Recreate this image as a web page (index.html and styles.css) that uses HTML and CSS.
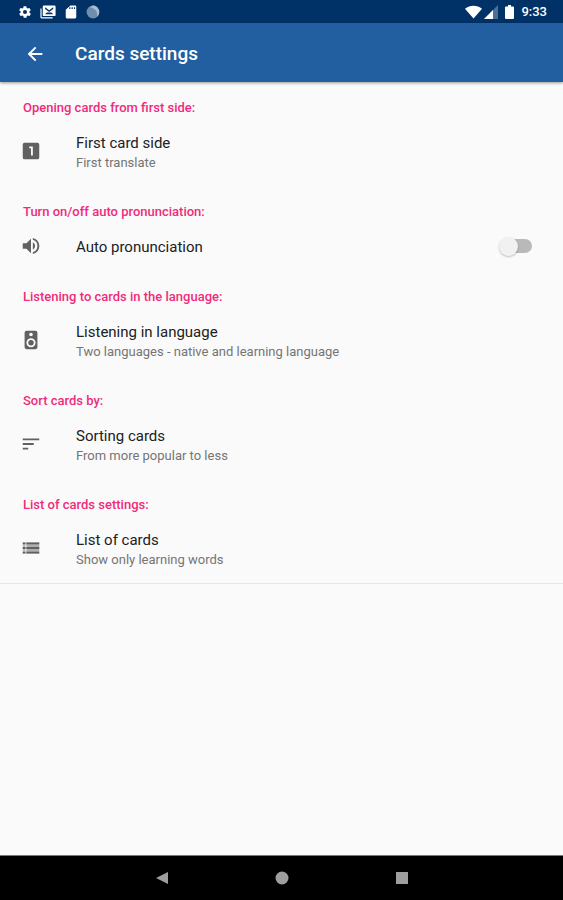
FILE: index.html
```html
<!DOCTYPE html>
<html lang="en">
  <head>
    <meta charset="UTF-8" />
    <meta name="viewport" content="width=device-width, initial-scale=1.0" />
    <title>Cards settings</title>
    <link rel="stylesheet" href="styles.css">
  </head>
  <body>
    <div class="status-bar">
      <div class="status-icons">
        <svg class="status-icon" viewBox="0 0 24 24"><path fill-rule="evenodd" d="M19.4 13c0-.3.1-.6.1-1s0-.7-.1-1l2.100-1.700c.2-.1.2-.4.1-.6l-2-3.500c-.1-.2-.4-.3-.6-.2l-2.500 1c-.5-.4-1.100-.7-1.700-1l-.4-2.600c0-.2-.2-.4-.5-.4h-4c-.2 0-.5.2-.5.4L9.100 5c-.6.3-1.200.6-1.700 1l-2.500-1c-.2-.1-.5 0-.6.2l-2 3.500c-.1.2-.1.5.1.6L4.600 11c-.1.300-.1.600-.1 1s0 .7.1 1l-2.100 1.700c-.2.1-.2.4-.1.6l2 3.500c.1.2.4.3.6.2l2.500-1c.5.4 1.100.7 1.700 1l.4 2.600c0 .2.2.4.5.4h4c.2 0 .5-.2.5-.4l.4-2.600c.6-.3 1.200-.6 1.700-1l2.500 1c.2.1.5 0 .6-.2l2-3.500c.1-.2.1-.5-.1-.6zM12 15.500a3.500 3.500 0 1 1 0-7 3.500 3.500 0 0 1 0 7z"/></svg>
        <svg class="status-icon status-icon-wide" viewBox="0 0 26 24"><path d="M0 6h2v15h19v2H2a2 2 0 0 1-2-2z"/><path fill-rule="evenodd" d="M6 1h18a2 2 0 0 1 2 2v14a2 2 0 0 1-2 2H6a2 2 0 0 1-2-2V3a2 2 0 0 1 2-2zm2 3v3l7 5 7-5V4l-7 5zm0 12h14l-3-3H11z"/></svg>
        <svg class="status-icon" viewBox="0 0 24 24"><path fill-rule="evenodd" d="M20 1h-9L3 8v13a2 2 0 0 0 2 2h14a2 2 0 0 0 2-2V3a2 2 0 0 0-1-2zM11 4H9v3h2zm4 0h-2v3h2zm4 0h-2v3h2z"/></svg>
        <svg class="status-icon" viewBox="0 0 24 24"><circle cx="12" cy="12" r="11" fill="#6f8eae"/><path fill="#a9bdd1" d="M12 1a11 11 0 0 1 7 19c1-7-1-13-12-16a11 11 0 0 1 5-3z"/></svg>
      </div>
      <div class="status-icons status-right">
        <svg class="status-icon status-icon-wifi" viewBox="0 0 18 14"><path d="M0 3.500C5-.8 13-.8 18 3.500L9 14z"/></svg>
        <svg class="status-icon" viewBox="0 0 14 14"><path fill="#4b6f97" d="M14 0v14H0z"/><path d="M9 5v9H0z"/></svg>
        <svg class="status-icon status-icon-battery" viewBox="0 0 9 14"><path d="M3 0h3v1.500h2a1 1 0 0 1 1 1V13a1 1 0 0 1-1 1H1a1 1 0 0 1-1-1V2.500a1 1 0 0 1 1-1h2z"/></svg>
        <span class="clock">9:33</span>
      </div>
    </div>

    <header class="app-bar">
      <button class="back-button" aria-label="Back">
        <svg class="back-icon" viewBox="0 0 24 24"><path d="M20 10.800H8.200l5.300-5.300L12 4l-8 8 8 8 1.500-1.500-5.300-5.300H20z"/></svg>
      </button>
      <h1 class="app-title">Cards settings</h1>
    </header>

    <main class="settings">
      <section class="group">
        <h2 class="group-title">Opening cards from first side:</h2>
        <button class="row">
          <svg class="row-icon" viewBox="0 0 24 24"><path fill-rule="evenodd" d="M5 3h14a2 2 0 0 1 2 2v14a2 2 0 0 1-2 2H5a2 2 0 0 1-2-2V5a2 2 0 0 1 2-2zm9 14V7h-4v2h2v8z"/></svg>
          <span class="row-text">
            <span class="row-title">First card side</span>
            <span class="row-summary">First translate</span>
          </span>
        </button>
      </section>

      <section class="group">
        <h2 class="group-title">Turn on/off auto pronunciation:</h2>
        <label class="row" for="autoPronunciation">
          <svg class="row-icon" viewBox="0 0 24 24"><path d="M3 9v6h4l5 5V4L7 9zm13.500 3A4.500 4.500 0 0 0 14 8v8a4.500 4.500 0 0 0 2.500-4zM14 3.200v2.100a7 7 0 0 1 0 13.400v2.100a9 9 0 0 0 0-17.600z"/></svg>
          <span class="row-text">
            <span class="row-title">Auto pronunciation</span>
          </span>
          <input class="switch" type="checkbox" role="switch" id="autoPronunciation" />
        </label>
      </section>

      <section class="group">
        <h2 class="group-title">Listening to cards in the language:</h2>
        <button class="row">
          <svg class="row-icon" viewBox="0 0 24 24"><path fill-rule="evenodd" d="M17 2H7a2 2 0 0 0-2 2v16a2 2 0 0 0 2 2h10a2 2 0 0 0 2-2V4a2 2 0 0 0-2-2zm-5 2a2 2 0 1 1 0 4 2 2 0 0 1 0-4zm0 16a5 5 0 1 1 0-10 5 5 0 0 1 0 10z"/><circle cx="12" cy="15" r="3"/></svg>
          <span class="row-text">
            <span class="row-title">Listening in language</span>
            <span class="row-summary">Two languages - native and learning language</span>
          </span>
        </button>
      </section>

      <section class="group">
        <h2 class="group-title">Sort cards by:</h2>
        <button class="row">
          <svg class="row-icon" viewBox="0 0 24 24"><path d="M3 18h6v-2H3zM3 6v2h18V6zm0 7h12v-2H3z"/></svg>
          <span class="row-text">
            <span class="row-title">Sorting cards</span>
            <span class="row-summary">From more popular to less</span>
          </span>
        </button>
      </section>

      <section class="group">
        <h2 class="group-title">List of cards settings:</h2>
        <button class="row">
          <svg class="row-icon" viewBox="0 0 24 24"><path opacity="0.4" d="M3 6h3v12H3z"/><path opacity="0.5" d="M7 6h14v12H7z"/><path d="M3 8h3V6H3zm0 5h3v-2H3zm0 5h3v-2H3zM7 8h14V6H7zm0 5h14v-2H7zm0 5h14v-2H7z"/></svg>
          <span class="row-text">
            <span class="row-title">List of cards</span>
            <span class="row-summary">Show only learning words</span>
          </span>
        </button>
      </section>
    </main>

    <nav class="nav-bar">
      <button class="nav-button" aria-label="Back">
        <svg class="nav-icon" viewBox="0 0 14 14"><path d="M13 1v12L1 7z"/></svg>
      </button>
      <button class="nav-button" aria-label="Home">
        <svg class="nav-icon" viewBox="0 0 14 14"><circle cx="7" cy="7" r="6.500"/></svg>
      </button>
      <button class="nav-button" aria-label="Recent apps">
        <svg class="nav-icon" viewBox="0 0 14 14"><path d="M1 1h12v12H1z"/></svg>
      </button>
    </nav>
  </body>
</html>
```

FILE: styles.css
```css
* {
  box-sizing: border-box;
}
body {
  margin: 0;
  min-height: 100vh;
  display: flex;
  flex-direction: column;
  font-family: Roboto, Arial, sans-serif;
  background-color: #fafafa;
  color: #212121;
}
button {
  border: none;
  padding: 0;
  background: none;
  font: inherit;
  color: inherit;
  text-align: left;
  cursor: pointer;
}

/* Status bar */
.status-bar {
  height: 23px;
  padding: 0 16px 0 18px;
  display: flex;
  justify-content: space-between;
  align-items: center;
  background-color: #003267;
  color: #fff;
}
.status-icons {
  display: flex;
  align-items: center;
  gap: 8px;
}
.status-right {
  gap: 2px;
}
.status-icon {
  width: 14px;
  height: 14px;
  fill: #fff;
}
.status-icon-wide {
  width: 16px;
}
.status-icon-wifi {
  width: 17px;
}
.status-icon-battery {
  width: 9px;
  margin: 0 5px;
}
.clock {
  font-size: 13px;
  font-weight: 500;
}

/* App bar */
.app-bar {
  height: 59px;
  padding: 2px 0 0 24px;
  display: flex;
  align-items: center;
  gap: 29px;
  background-color: #215fa0;
  color: #fff;
  box-shadow: 0 1px 3px rgba(0, 0, 0, 0.4);
}
.back-button {
  display: flex;
}
.back-icon {
  width: 22px;
  height: 22px;
  fill: #fff;
}
.app-title {
  margin: 0;
  font-size: 19px;
  font-weight: 500;
}

/* Settings list */
.settings {
  flex: 1;
}
.group {
  padding-top: 17px;
}
.group:last-child {
  border-bottom: 1px solid #e6e6e6;
}
.group-title {
  margin: 0;
  padding: 0 23px;
  font-size: 13px;
  line-height: 18px;
  font-weight: 500;
  color: #f02b7c;
}
.row {
  width: 100%;
  padding: 16px 31px 14px 20px;
  display: flex;
  align-items: center;
  gap: 34px;
  cursor: pointer;
}
.row-icon {
  width: 22px;
  height: 22px;
  flex: none;
  margin: -3px 0 0;
  fill: #616161;
}
.row-text {
  flex: 1;
  display: flex;
  flex-direction: column;
}
.row-title {
  font-size: 15px;
  line-height: 20px;
}
.row-summary {
  font-size: 13px;
  line-height: 19px;
  color: #757575;
}

/* Switch */
.switch {
  appearance: none;
  width: 30px;
  height: 14px;
  margin: -2px 0 0;
  display: flex;
  align-items: center;
  border-radius: 7px;
  background-color: #b9b9b9;
  cursor: pointer;
}
.switch::before {
  content: "";
  width: 19px;
  height: 19px;
  margin: 0 -3px;
  border-radius: 50%;
  background-color: #f1f1f1;
  box-shadow: 0 1px 2px rgba(0, 0, 0, 0.25);
}
.switch:checked {
  justify-content: flex-end;
}

/* Navigation bar */
.nav-bar {
  height: 45px;
  display: flex;
  justify-content: center;
  align-items: center;
  gap: 80px;
  border-top: 1px solid #777;
  background-color: #000;
}
.nav-button {
  width: 40px;
  height: 40px;
  display: flex;
  justify-content: center;
  align-items: center;
}
.nav-icon {
  width: 14px;
  height: 14px;
  fill: #9e9e9e;
}
```
